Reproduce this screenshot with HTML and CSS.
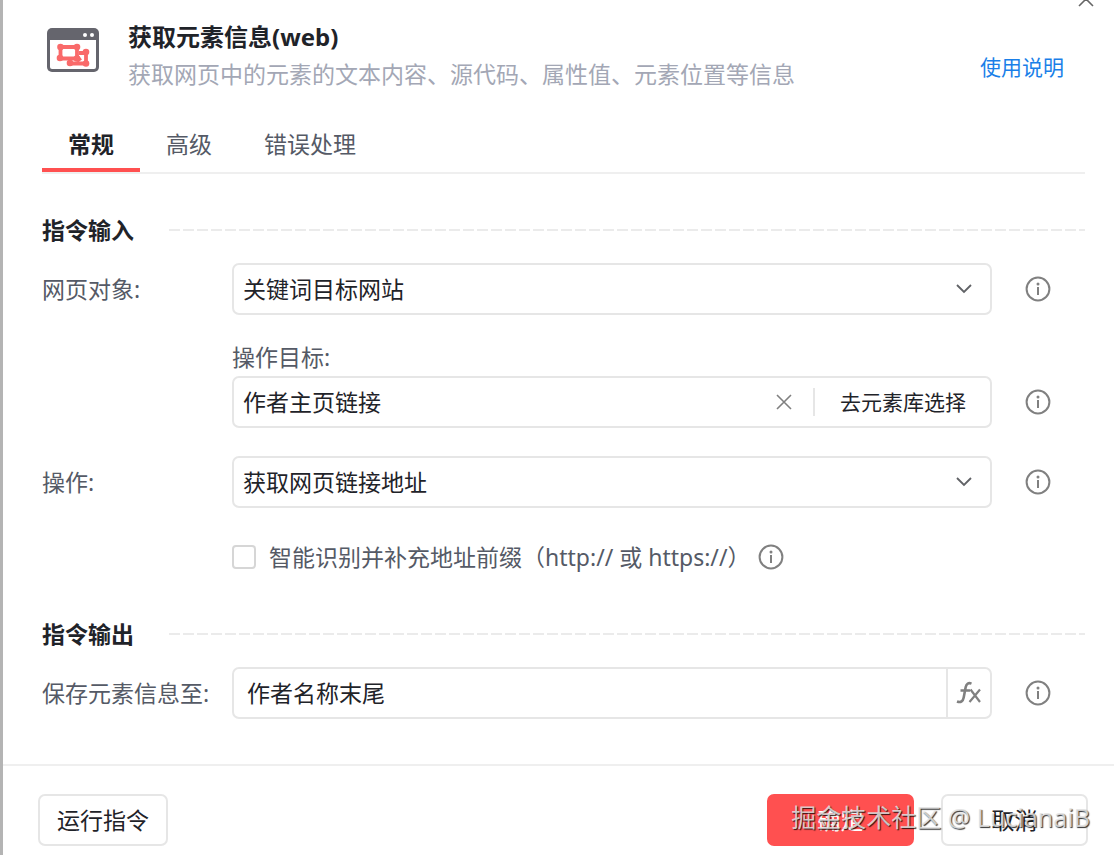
FILE: index.html
```
<!DOCTYPE html>
<html lang="zh-CN">
<head>
  <meta charset="UTF-8">
  <meta name="viewport" content="width=device-width, initial-scale=1.0">
  <title>获取元素信息(web)</title>
  <link rel="stylesheet" href="styles.css">
</head>
<body>
  <svg class="sprite" aria-hidden="true">
    <symbol id="icon-info" viewBox="0 0 26 26">
      <circle cx="13" cy="13" r="11.4" fill="none" stroke="currentColor" stroke-width="2"/>
      <circle cx="13" cy="8" r="1.5" fill="currentColor"/>
      <path d="M13 11v8" stroke="currentColor" stroke-width="2"/>
    </symbol>
    <symbol id="icon-arrow" viewBox="0 0 16 10">
      <path d="M1 1l7 7 7-7" fill="none" stroke="currentColor" stroke-width="1.8"/>
    </symbol>
    <symbol id="icon-close" viewBox="0 0 16 16">
      <path d="M1 1l14 14M15 1L1 15" fill="none" stroke="currentColor" stroke-width="1.6"/>
    </symbol>
  </svg>

  <main class="dialog">
    <button class="close" type="button" aria-label="关闭"><svg><use href="#icon-close"/></svg></button>

    <header class="header">
      <svg class="logo" viewBox="0 0 54 46">
        <rect x="1" y="1" width="52" height="44" rx="5" fill="#65656d"/>
        <path d="M4 13h46v27a2 2 0 0 1-2 2H6a2 2 0 0 1-2-2z" fill="#fff"/>
        <circle cx="39" cy="8" r="2" fill="#fff"/>
        <circle cx="46" cy="8" r="2" fill="#fff"/>
        <g fill="none" stroke="#f96a6a" stroke-width="3.800">
          <path d="M14.500 20h16.500v11.500h-16.500z"/>
          <path d="M33 26h7v10.500H24v-2.500"/>
          <path d="M30 29l4 5" stroke-width="5"/>
        </g>
        <g fill="#f96a6a">
          <circle cx="14.500" cy="20" r="3.300"/>
          <circle cx="31" cy="20" r="3.300"/>
          <circle cx="14" cy="31" r="3.300"/>
          <circle cx="31" cy="31.500" r="3.300"/>
          <circle cx="40" cy="25" r="3.300"/>
          <circle cx="40" cy="36.500" r="3.300"/>
          <circle cx="24" cy="36" r="3.300"/>
        </g>
      </svg>
      <div class="heading">
        <h1>获取元素信息(web)</h1>
        <p>获取网页中的元素的文本内容、源代码、属性值、元素位置等信息</p>
      </div>
      <a class="help" href="#">使用说明</a>
    </header>

    <nav class="tabs">
      <button class="tab active" type="button">常规</button>
      <button class="tab" type="button">高级</button>
      <button class="tab" type="button">错误处理</button>
    </nav>

    <form class="form">
      <h2 class="section-title">指令输入</h2>
      <div class="rows">
        <div class="row">
          <label class="label" for="page">网页对象:</label>
          <div class="box">
            <select id="page"><option>关键词目标网站</option></select>
            <svg class="arrow"><use href="#icon-arrow"/></svg>
          </div>
          <button class="info" type="button" aria-label="说明"><svg><use href="#icon-info"/></svg></button>
        </div>

        <div class="row">
          <div class="label"></div>
          <div class="field">
            <label for="target">操作目标:</label>
            <div class="box">
              <input id="target" type="text" value="作者主页链接">
              <button class="clear" type="button" aria-label="清除"><svg><use href="#icon-close"/></svg></button>
              <button class="pick" type="button">去元素库选择</button>
            </div>
          </div>
          <button class="info" type="button" aria-label="说明"><svg><use href="#icon-info"/></svg></button>
        </div>

        <div class="row">
          <label class="label" for="action">操作:</label>
          <div class="box">
            <select id="action"><option>获取网页链接地址</option></select>
            <svg class="arrow"><use href="#icon-arrow"/></svg>
          </div>
          <button class="info" type="button" aria-label="说明"><svg><use href="#icon-info"/></svg></button>
        </div>
      </div>

      <div class="check-row">
        <input id="prefix" type="checkbox">
        <label for="prefix">智能识别并补充地址前缀（http:// 或 https://）</label>
        <button class="info" type="button" aria-label="说明"><svg><use href="#icon-info"/></svg></button>
      </div>

      <h2 class="section-title">指令输出</h2>
      <div class="rows">
        <div class="row">
          <label class="label" for="output">保存元素信息至:</label>
          <div class="box">
            <input id="output" class="wide" type="text" value="作者名称末尾">
            <button class="fx" type="button" aria-label="fx">
              <svg viewBox="0 0 26 24" fill="none" stroke="currentColor">
                <path d="M1 20.500c4 1.500 6-.5 6.700-4l2-10.500c.7-3.500 2.800-4.600 5.800-3.400M4.500 9.500h9.500" stroke-width="2.600"/>
                <path d="M14.500 8.500l9.500 12.500M24 8.500L13.500 21" stroke-width="2.200"/>
              </svg>
            </button>
          </div>
          <button class="info" type="button" aria-label="说明"><svg><use href="#icon-info"/></svg></button>
        </div>
      </div>
    </form>

    <footer class="footer">
      <button class="btn run" type="button">运行指令</button>
      <button class="btn primary" type="button">确定</button>
      <button class="btn" type="button">取消</button>
      <span class="watermark">掘金技术社区 @ LucianaiB</span>
    </footer>
  </main>
</body>
</html>
```

FILE: styles.css
```
:root {
  --red: #ff5050;
  --text: #1f2329;
  --label: #555a66;
  --muted: #a3a7b5;
  --border: #e6e6e6;
  --line: #efefef;
  --icon: #808080;
  --link: #1a7fe8;
}
* {
  box-sizing: border-box;
}
body {
  margin: 0;
  background: #fff;
  color: var(--text);
  font-family: "Noto Sans", "Noto Sans CJK SC", sans-serif;
  font-size: 23px;
  line-height: 32px;
}
button, input, select {
  font: inherit;
  color: inherit;
  background: none;
  border: 0;
  padding: 0;
  margin: 0;
}
.sprite {
  display: none;
}
.dialog {
  position: relative;
  min-height: 100vh;
  overflow: hidden;
  border-left: 3px solid #b4b4b4;
}
.close {
  position: absolute;
  top: -9px;
  right: 20px;
  width: 16px;
  height: 16px;
  line-height: 0;
  color: #666;
}
.close svg {
  width: 16px;
  height: 16px;
}

/* header */
.header {
  display: flex;
  align-items: flex-start;
  padding: 23px 50px 0 43px;
}
.logo {
  width: 54px;
  height: 46px;
  margin-top: 4px;
}
.heading {
  flex: 1;
  margin-left: 28px;
}
.heading h1 {
  margin: 0 0 9px;
  font-size: 24px;
  line-height: 28px;
  font-weight: 700;
}
.heading p {
  margin: 0;
  line-height: 28px;
  color: var(--muted);
}
.help {
  margin-top: 30px;
  font-size: 21px;
  line-height: 28px;
  color: var(--link);
  text-decoration: none;
}

/* tabs */
.tabs {
  display: flex;
  margin: 40px 29px 0 39px;
  border-bottom: 2px solid var(--line);
}
.tab {
  padding: 0 26px 8px;
  border-bottom: 4px solid transparent;
  color: var(--label);
}
.tab.active {
  border-color: var(--red);
  color: var(--text);
  font-weight: 700;
}

/* form */
.form {
  padding: 40px 29px 45px 39px;
}
.section-title {
  display: flex;
  align-items: center;
  gap: 35px;
  margin: 0 0 17px;
  font-size: 23px;
  font-weight: 700;
}
.section-title::after {
  content: "";
  flex: 1;
  height: 2px;
  background: repeating-linear-gradient(90deg, #ebebeb 0 11px, transparent 11px 14px);
}
.rows {
  display: flex;
  flex-direction: column;
  gap: 28px;
  color: var(--label);
}
.row {
  display: flex;
  align-items: flex-end;
}
.label {
  width: 190px;
  padding: 10px 0;
}
.field {
  flex: 1;
}
.field label {
  display: block;
  margin-bottom: 5px;
  line-height: 28px;
}
.box {
  position: relative;
  flex: 1;
  display: flex;
  height: 52px;
  border: 2px solid var(--border);
  border-radius: 7px;
  color: var(--text);
}
.box select, .box input {
  flex: 1;
  min-width: 0;
  padding: 0 9px;
  appearance: none;
}
.box .wide {
  padding: 0 13px;
}
.arrow {
  position: absolute;
  right: 18px;
  top: 19px;
  width: 16px;
  height: 10px;
  color: #606266;
  pointer-events: none;
}
.clear {
  width: 58px;
  line-height: 0;
  color: var(--icon);
}
.clear svg {
  width: 16px;
  height: 16px;
}
.pick {
  display: flex;
  align-items: center;
  padding-right: 24px;
  font-size: 21px;
}
.pick::before {
  content: "";
  width: 2px;
  height: 28px;
  margin-right: 25px;
  background: var(--border);
}
.fx {
  width: 44px;
  border-left: 2px solid var(--border);
  line-height: 0;
  color: var(--icon);
}
.fx svg {
  width: 26px;
  height: 24px;
}
.info {
  width: 26px;
  height: 26px;
  line-height: 0;
  color: var(--icon);
}
.info svg {
  width: 26px;
  height: 26px;
}
.row .info {
  margin: 0 34px 13px 33px;
}
.check-row {
  display: flex;
  align-items: center;
  margin: 33px 0 45px 190px;
  color: var(--label);
}
.check-row input {
  width: 24px;
  height: 24px;
  margin-right: 13px;
  border: 2px solid #d6d6d6;
  border-radius: 4px;
  appearance: none;
}
.check-row .info {
  margin-left: 8px;
}

/* footer */
.footer {
  position: relative;
  display: flex;
  padding: 28px 26px 9px 35px;
  border-top: 2px solid var(--line);
}
.btn {
  width: 147px;
  height: 52px;
  border: 2px solid var(--border);
  border-radius: 7px;
}
.btn + .btn {
  margin-left: 27px;
}
.btn.run {
  width: 130px;
  margin-right: auto;
}
.btn.primary {
  border-color: var(--red);
  background: var(--red);
  color: #fff;
}
.watermark {
  position: absolute;
  top: 35px;
  right: 24px;
  font-size: 25px;
  color: rgba(228, 228, 228, 0.85);
  text-shadow: 1px 1px 1px rgba(0, 0, 0, 0.8);
  pointer-events: none;
}
```
